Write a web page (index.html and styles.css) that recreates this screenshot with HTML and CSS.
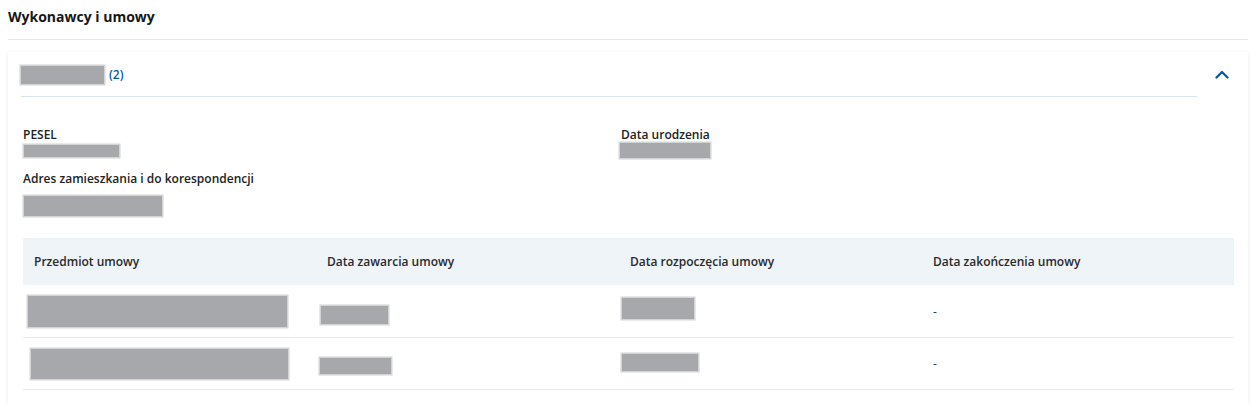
FILE: index.html
```html
<!DOCTYPE html>
<html lang="pl">
<head>
<meta charset="utf-8">
<title>Wykonawcy i umowy</title>
<link rel="stylesheet" href="styles.css">
</head>
<body>
<div class="page">
  <h2 class="title">Wykonawcy i umowy</h2>
  <section class="card">
    <div class="card-head">
      <div class="head-main">
        <span class="redact r-name"></span>
        <span class="count">(2)</span>
      </div>
      <button class="toggle" aria-label="Zwiń">
        <svg width="14" height="9" viewBox="0 0 14 9"><path d="M1.5 7.5 L7 2 L12.5 7.5" fill="none" stroke="#0b56a4" stroke-width="2.3" stroke-linecap="round" stroke-linejoin="round"/></svg>
      </button>
    </div>
    <div class="details">
      <div class="field">
        <div class="label">PESEL</div>
        <span class="redact r-pesel"></span>
      </div>
      <div class="field">
        <div class="label">Data urodzenia</div>
        <span class="redact r-birth"></span>
      </div>
      <div class="field field-wide">
        <div class="label">Adres zamieszkania i do korespondencji</div>
        <span class="redact r-addr"></span>
      </div>
    </div>
    <div class="table">
      <div class="trow thead">
        <div class="cell">Przedmiot umowy</div>
        <div class="cell">Data zawarcia umowy</div>
        <div class="cell">Data rozpoczęcia umowy</div>
        <div class="cell">Data zakończenia umowy</div>
      </div>
      <div class="trow tbody-row">
        <div class="cell"><span class="redact r-subj1"></span></div>
        <div class="cell"><span class="redact r-sign1"></span></div>
        <div class="cell"><span class="redact r-start1"></span></div>
        <div class="cell">-</div>
      </div>
      <div class="trow tbody-row">
        <div class="cell"><span class="redact r-subj2"></span></div>
        <div class="cell"><span class="redact r-sign2"></span></div>
        <div class="cell"><span class="redact r-start2"></span></div>
        <div class="cell">-</div>
      </div>
    </div>
  </section>
</div>
</body>
</html>
```
FILE: styles.css
```css
* { box-sizing: border-box; }
html, body { margin: 0; padding: 0; background: #ffffff; }
body {
  font-family: "Open Sans", "Noto Sans", "Liberation Sans", sans-serif;
  color: #1f1f1f;
}
.page { padding: 7px 9px 0 8px; }
.title {
  margin: 0;
  font-size: 14px;
  line-height: 20px;
  font-weight: 700;
  color: #161616;
  padding-bottom: 12px;
  border-bottom: 1px solid #e2e9f1;
}
.card {
  margin-top: 12px;
  background: #fff;
  box-shadow: 0 1px 4px rgba(0, 0, 0, 0.09);
  padding: 0 14px 14px 15px;
}
.redact {
  display: block;
  background: #a7a8ac;
  box-shadow: 0 0 0 1.5px #d3d4d6;
}
.card-head {
  display: flex;
  align-items: flex-start;
}
.head-main {
  flex: 1;
  display: flex;
  align-items: center;
  gap: 5px;
  margin-left: -2px;
  padding: 14px 0 12px;
  border-bottom: 1px solid #d9e4f1;
  margin-right: 18px;
}
.count {
  font-size: 12px;
  font-weight: 600;
  color: #0b56a4;
  line-height: 18px;
}
.toggle {
  border: 0;
  background: none;
  padding: 0;
  margin: 18px 5px 0 0;
  width: 14px;
  height: 9px;
  display: flex;
}
.r-name { width: 83px; height: 18px; }
.details {
  display: grid;
  grid-template-columns: 598px 1fr;
  row-gap: 13px;
  padding-top: 30px;
}
.field-wide { grid-column: 1 / 3; }
.label {
  font-size: 12px;
  font-weight: 600;
  line-height: 16px;
  color: #222;
}
.r-pesel { width: 95px; height: 12px; margin: 2px 0 0 1px; }
.r-birth { width: 90px; height: 15px; margin: 0 0 0 -1px; }
.r-addr { width: 138px; height: 20px; margin: 9px 0 0 1px; }
.table { margin-top: 22px; }
.trow {
  display: grid;
  grid-template-columns: 293px 303px 303px 1fr;
}
.thead {
  background: #eff4f9;
  height: 47px;
  align-items: center;
}
.thead .cell {
  font-size: 12px;
  font-weight: 600;
  color: #2a2a2a;
  padding-left: 11px;
}
.tbody-row {
  border-bottom: 1px solid #e4eaf1;
  align-items: center;
}
.tbody-row .cell {
  font-size: 12px;
  color: #333;
  padding-left: 11px;
}
.tbody-row .cell:first-child { padding-left: 5px; }
.tbody-row:nth-child(2) { height: 53px; }
.tbody-row:nth-child(3) { height: 52px; }
.r-subj1 { width: 259px; height: 31px; }
.r-sign1 { width: 67px; height: 18px; margin: 8px 0 0 -6px; }
.r-start1 { width: 72px; height: 21px; margin: 0 0 6px -8px; }
.r-subj2 { width: 257px; height: 30px; margin-left: 3px; }
.r-sign2 { width: 71px; height: 16px; margin: 4px 0 0 -7px; }
.r-start2 { width: 76px; height: 17px; margin: 0 0 3px -8px; }
```
